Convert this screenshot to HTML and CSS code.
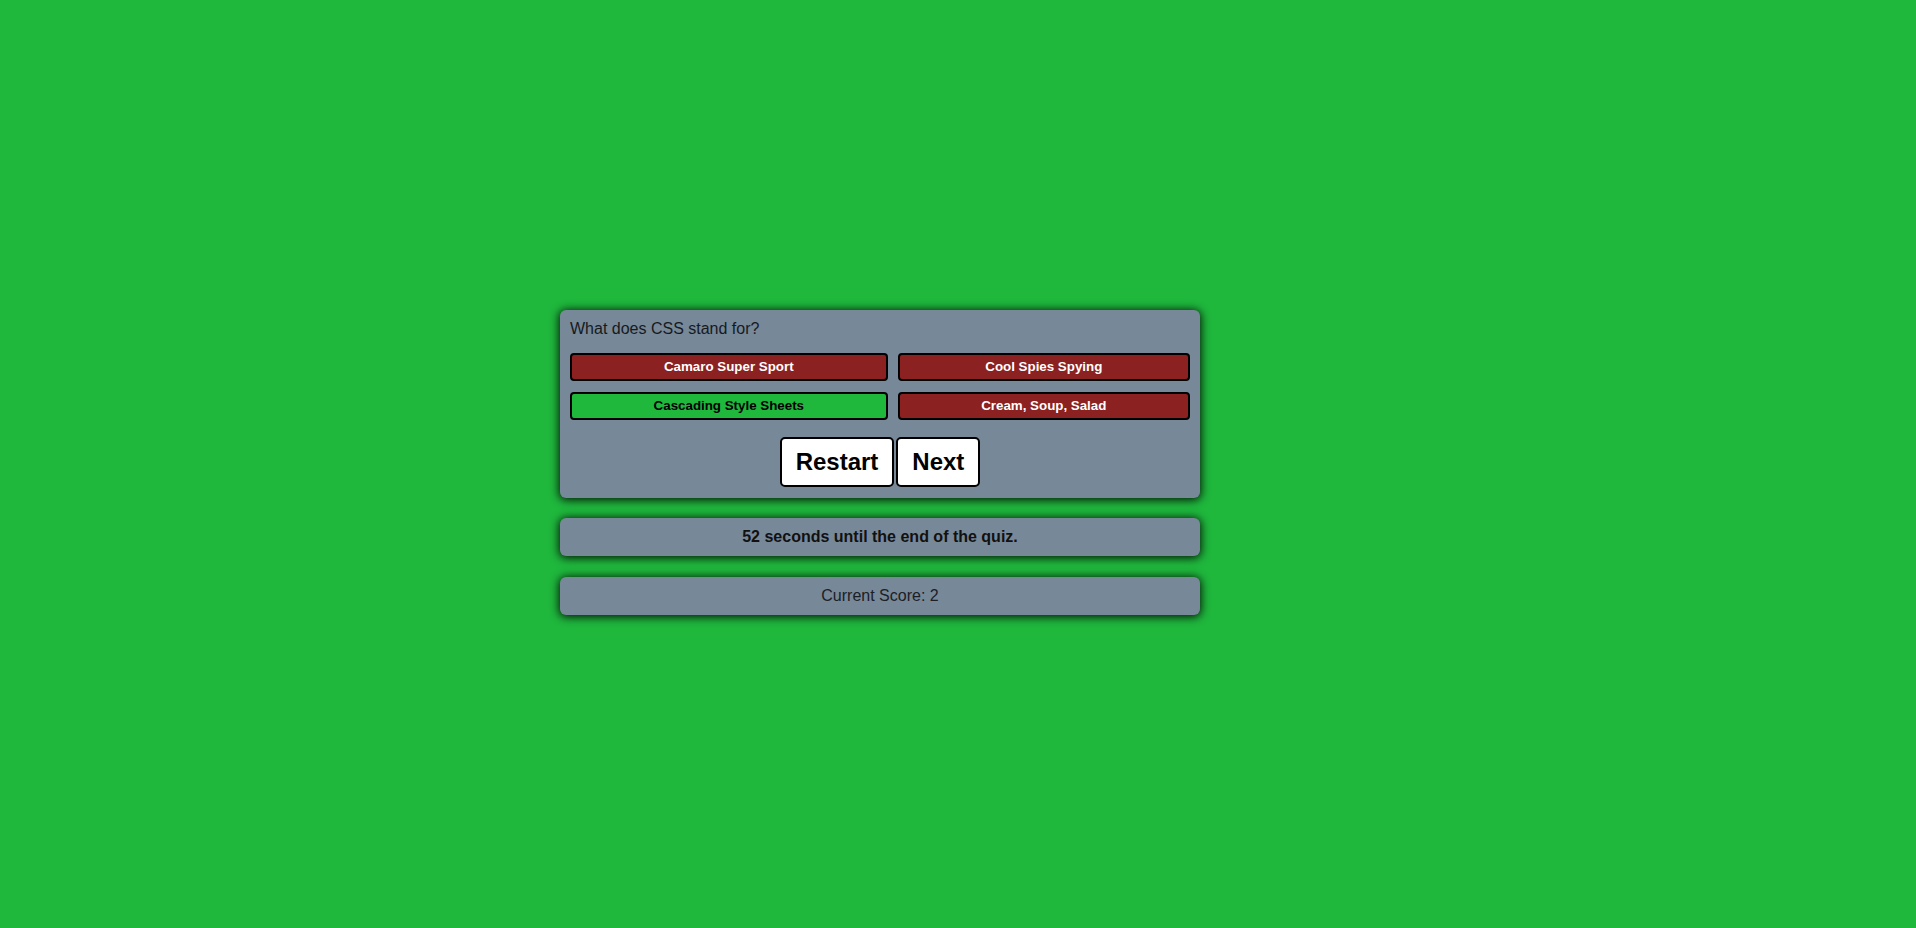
FILE: index.html
```html
<!DOCTYPE html>
<html lang="en">
<head>
<meta charset="utf-8">
<title>Quiz</title>
<link rel="stylesheet" href="styles.css">
</head>
<body>
<main class="wrap">
  <section class="card">
    <div class="question">What does CSS stand for?</div>
    <div class="answers">
      <button class="answer wrong">Camaro Super Sport</button>
      <button class="answer wrong">Cool Spies Spying</button>
      <button class="answer right">Cascading Style Sheets</button>
      <button class="answer wrong">Cream, Soup, Salad</button>
    </div>
    <div class="controls">
      <button class="ctrl">Restart</button>
      <button class="ctrl">Next</button>
    </div>
  </section>
  <section class="panel timer">52 seconds until the end of the quiz.</section>
  <section class="panel score">Current Score: 2</section>
</main>
</body>
</html>
```
FILE: styles.css
```css
html, body {
  margin: 0;
  padding: 0;
}
body {
  background: #1fb83d;
  font-family: "Liberation Sans", Arial, sans-serif;
  min-height: 928px;
}
.wrap {
  width: 640px;
  padding-top: 310px;
  padding-left: 560px;
  display: flex;
  flex-direction: column;
}
.card, .panel {
  background: #778899;
  border-radius: 6px;
  box-shadow: 0 1px 10px 1px rgba(0, 0, 0, 0.9);
}
.card {
  padding: 10px 10px 11px;
}
.question {
  font-size: 16px;
  line-height: 18px;
  color: #161a20;
  margin-bottom: 15px;
}
.answers {
  display: grid;
  grid-template-columns: auto auto;
  column-gap: 10px;
  row-gap: 11px;
}
.answer {
  font-family: "Liberation Sans", Arial, sans-serif;
  font-size: 13.333px;
  font-weight: bold;
  line-height: 16px;
  padding: 4px 8px;
  border: 2px solid #000;
  border-radius: 4px;
  cursor: pointer;
}
.wrong {
  background: #8c2121;
  color: #fff;
}
.right {
  background: #1fb83d;
  color: #000;
}
.controls {
  margin-top: 17px;
  display: flex;
  justify-content: center;
  gap: 2px;
}
.ctrl {
  font-family: "Liberation Sans", Arial, sans-serif;
  font-size: 24px;
  font-weight: bold;
  line-height: 28px;
  padding: 9px 14px;
  background: #fff;
  color: #000;
  border: 2px solid #000;
  border-radius: 5px;
  cursor: pointer;
}
.panel {
  padding: 10px;
  font-size: 16px;
  line-height: 18px;
  text-align: center;
  color: #111;
}
.timer {
  margin-top: 20px;
  font-weight: bold;
}
.score {
  margin-top: 21px;
  color: #1c2026;
}
```
